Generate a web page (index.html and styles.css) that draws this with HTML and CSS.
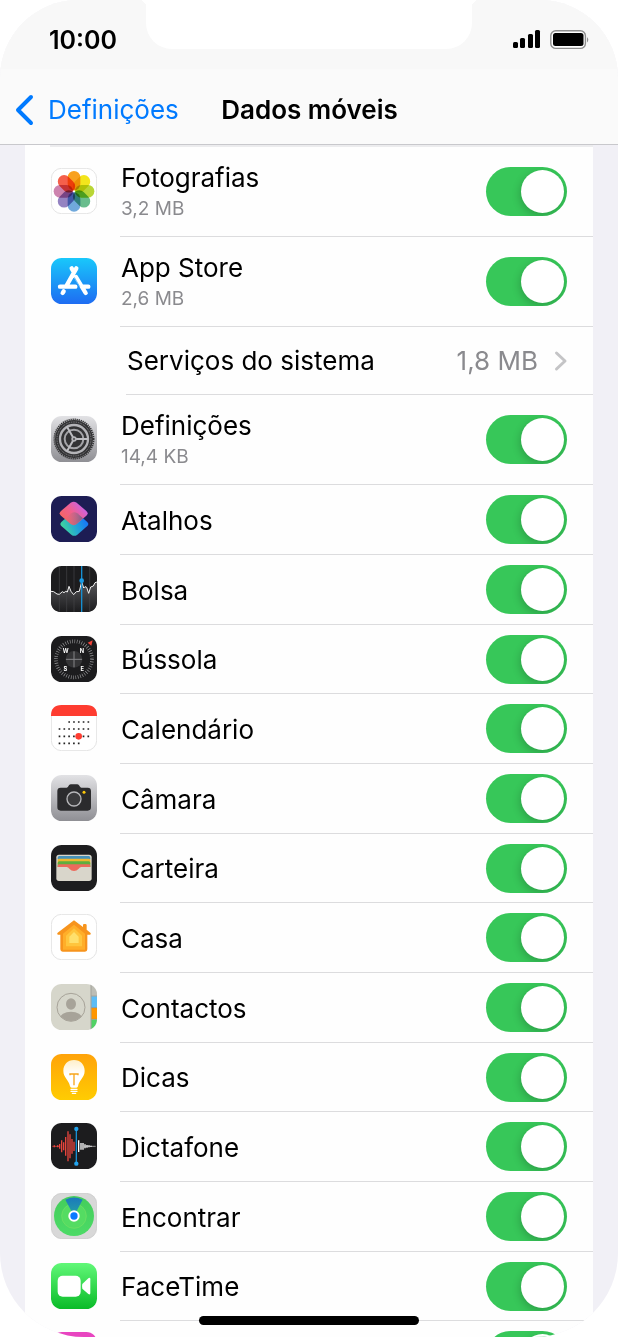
FILE: index.html
```html
<!DOCTYPE html>
<html lang="pt">
<head>
  <meta charset="UTF-8" />
  <meta name="viewport" content="width=device-width, initial-scale=1.0"/>
  <title>Dados móveis</title>
  <link rel="stylesheet" href="styles.css">
</head>
<body>
  <div class="phone">
    <header class="header">
      <div class="status">
        <span class="time">10:00</span>
        <div class="notch"></div>
        <div class="indicators">
          <svg width="28" height="19" viewBox="0 0 28 19">
            <rect x="0" y="12" width="5" height="6" rx="1.5"/>
            <rect x="7" y="8" width="5" height="10" rx="1.5"/>
            <rect x="15" y="4" width="5" height="14" rx="1.5"/>
            <rect x="22" y="0" width="5" height="18" rx="1.5"/>
          </svg>
          <svg width="40" height="20" viewBox="0 0 40 20">
            <rect x="0.8" y="0.8" width="34.6" height="17.6" rx="5" fill="#fff" stroke="#8e8e8e" stroke-width="1.4"/>
            <rect x="3" y="3" width="30.5" height="13" rx="2.5"/>
            <path d="M37 7q2.6 2.8 0 5.6z" fill="#8e8e8e"/>
          </svg>
        </div>
      </div>
      <nav class="nav">
        <a href="#" class="back">
          <svg width="20" height="32" viewBox="0 0 20 32">
            <path d="M17 3L4 16L17 29" fill="none" stroke="#007aff" stroke-width="4" stroke-linecap="round" stroke-linejoin="round"/>
          </svg>
          Definições
        </a>
        <h1>Dados móveis</h1>
      </nav>
    </header>

    <main class="content">
      <ul class="list">
        <li class="row tall">
          <svg class="icon" viewBox="0 0 138 138">
            <rect x="1" y="1" width="136" height="136" rx="31" fill="#fff" stroke="#e4e4e4" stroke-width="3"/>
            <g class="petals" transform="translate(69 70)">
              <rect x="-19" y="-61" width="38" height="58" rx="19" fill="#f8a11f"/>
              <rect x="-19" y="-61" width="38" height="58" rx="19" fill="#f3e51c" transform="rotate(45)"/>
              <rect x="-19" y="-61" width="38" height="58" rx="19" fill="#b9d636" transform="rotate(90)"/>
              <rect x="-19" y="-61" width="38" height="58" rx="19" fill="#69bd8d" transform="rotate(135)"/>
              <rect x="-19" y="-61" width="38" height="58" rx="19" fill="#70a9dc" transform="rotate(180)"/>
              <rect x="-19" y="-61" width="38" height="58" rx="19" fill="#9483c2" transform="rotate(225)"/>
              <rect x="-19" y="-61" width="38" height="58" rx="19" fill="#cd83ae" transform="rotate(270)"/>
              <rect x="-19" y="-61" width="38" height="58" rx="19" fill="#f5604b" transform="rotate(315)"/>
            </g>
          </svg>
          <div class="body">
            <label for="photos">Fotografias<small>3,2 MB</small></label>
            <input type="checkbox" class="switch" id="photos" checked>
          </div>
        </li>
        <li class="row tall">
          <svg class="icon" viewBox="0 0 138 138">
            <defs><linearGradient id="store" x2="0" y2="1"><stop stop-color="#19c8fb"/><stop offset="1" stop-color="#1e6cf2"/></linearGradient></defs>
            <rect width="138" height="138" rx="32" fill="url(#store)"/>
            <g fill="none" stroke="#fff" stroke-width="13" stroke-linecap="round">
              <path d="M76 31L46 84M38 100L35 105M62 31L66 38M75 57L104 105M27 86H73M94 86H112"/>
            </g>
            <path d="M70 58L86 86" stroke="#1e9af7" stroke-width="2"/>
          </svg>
          <div class="body">
            <label for="appstore">App Store<small>2,6 MB</small></label>
            <input type="checkbox" class="switch" id="appstore" checked>
          </div>
        </li>
        <li class="row system">
          <a href="#" class="body">
            <span>Serviços do sistema</span>
            <span class="value">1,8 MB</span>
            <svg width="14" height="22" viewBox="0 0 14 22">
              <path d="M2.500 3L11 11L2.500 19" fill="none" stroke="#c4c4c6" stroke-width="3" stroke-linecap="round" stroke-linejoin="round"/>
            </svg>
          </a>
        </li>
        <li class="row tall">
          <svg class="icon" viewBox="0 0 138 138">
            <defs><linearGradient id="metal" x2="0" y2="1"><stop stop-color="#e2e2e5"/><stop offset="1" stop-color="#8f8f94"/></linearGradient></defs>
            <rect width="138" height="138" rx="32" fill="url(#metal)"/>
            <circle cx="69" cy="69" r="57" fill="#333335"/>
            <circle cx="69" cy="69" r="59" fill="none" stroke="#333335" stroke-width="5" stroke-dasharray="3.700 2.480"/>
            <circle cx="69" cy="69" r="51" fill="none" stroke="#8e8e92" stroke-width="3" stroke-dasharray="2.500 2.840"/>
            <circle cx="69" cy="69" r="42" fill="none" stroke="#b4b4b8" stroke-width="7"/>
            <circle cx="69" cy="69" r="28" fill="none" stroke="#a4a4a8" stroke-width="6"/>
            <path d="M69 69H112M69 69L47.500 31.800M69 69L47.500 106.200" stroke="#bdbdc1" stroke-width="6"/>
            <circle cx="69" cy="69" r="8" fill="#b4b4b8"/>
            <circle cx="69" cy="69" r="3" fill="#4a4a4c"/>
          </svg>
          <div class="body">
            <label for="settings">Definições<small>14,4 KB</small></label>
            <input type="checkbox" class="switch" id="settings" checked>
          </div>
        </li>
      </ul>

      <ul class="list apps">
        <li class="row">
          <svg class="icon" viewBox="0 0 138 138">
            <defs>
              <linearGradient id="cut1" x1="0.1" y1="0.8" x2="0.9" y2="0.2"><stop stop-color="#f5665e"/><stop offset="0.5" stop-color="#f0608f"/><stop offset="1" stop-color="#c862ea"/></linearGradient>
              <linearGradient id="cut2" x1="0.1" y1="0.7" x2="0.9" y2="0.4"><stop stop-color="#3fd39e"/><stop offset="0.5" stop-color="#24a9d2"/><stop offset="1" stop-color="#187bf5"/></linearGradient>
              <linearGradient id="cut3"><stop stop-color="#c9707a" stop-opacity="0"/><stop offset="1" stop-color="#7a6288"/></linearGradient>
            </defs>
            <rect width="138" height="138" rx="32" fill="#1d1d54"/>
            <path d="M61 52Q70 46 79 52L108 77Q116 84 108 91L79 116Q70 123 61 116L32 91Q24 84 32 77Z" fill="url(#cut2)"/>
            <path d="M59 20Q68 14 77 20L106 45Q114 52 106 59L77 84Q68 91 59 84L30 59Q22 52 30 45Z" fill="url(#cut1)"/>
            <path d="M61 52Q70 46 79 52L96 67L77 84Q68 91 59 84L42 68Z" fill="url(#cut3)"/>
          </svg>
          <div class="body">
            <label for="shortcuts">Atalhos</label>
            <input type="checkbox" class="switch" id="shortcuts" checked>
          </div>
        </li>
        <li class="row">
          <svg class="icon" viewBox="0 0 138 138">
            <defs><linearGradient id="stock" x2="0" y2="1"><stop stop-color="#555558"/><stop offset="1" stop-color="#1c1c1e"/></linearGradient></defs>
            <rect width="138" height="138" rx="32" fill="#1c1c1e"/>
            <path d="M0 76L8 77L18 84L25 85L34 77L39 80L44 76L49 78L54 61L60 76L68 86L76 77L85 76L92 47L98 66L102 62L107 64L113 82L119 63L127 60L132 50L138 48V106Q138 138 106 138H32Q0 138 0 106Z" fill="url(#stock)"/>
            <path d="M25 1V137M47 0V138M69 0V138M116 2V136" stroke="#454548" stroke-width="2"/>
            <path d="M0 76L8 77L18 84L25 85L34 77L39 80L44 76L49 78L54 61L60 76L68 86L76 77L85 76L92 47L98 66L102 62L107 64L113 82L119 63L127 60L132 50L138 48" fill="none" stroke="#f2f2f2" stroke-width="3" stroke-linejoin="round"/>
            <path d="M92 0V138" stroke="#168fd2" stroke-width="4"/>
            <circle cx="92" cy="44" r="7" fill="#1b9de6"/>
          </svg>
          <div class="body">
            <label for="stocks">Bolsa</label>
            <input type="checkbox" class="switch" id="stocks" checked>
          </div>
        </li>
        <li class="row">
          <svg class="icon" viewBox="0 0 138 138">
            <rect width="138" height="138" rx="32" fill="#1c1c1e"/>
            <circle cx="69" cy="70" r="54" fill="none" stroke="#a0a0a2" stroke-width="11" stroke-dasharray="1.800 5.270"/>
            <circle cx="69" cy="70" r="25" fill="#343436"/>
            <path d="M69 46V94M45 70H93" stroke="#858587" stroke-width="3"/>
            <g class="points">
              <text x="44" y="51">W</text>
              <text x="93" y="51">N</text>
              <text x="43" y="104">S</text>
              <text x="94" y="104">E</text>
            </g>
            <path d="M125 13L110 20L121 29Z" fill="#f0443a"/>
          </svg>
          <div class="body">
            <label for="compass">Bússola</label>
            <input type="checkbox" class="switch" id="compass" checked>
          </div>
        </li>
        <li class="row">
          <svg class="icon" viewBox="0 0 138 138">
            <rect x="1" y="1" width="136" height="136" rx="31" fill="#fff" stroke="#e4e4e4" stroke-width="3"/>
            <path d="M0 33V32Q0 0 32 0H106Q138 0 138 32V33Z" fill="#fe3c30"/>
            <path d="M52 51H116M23 72H116M23 94H116M23 115H87" stroke="#222" stroke-width="5" stroke-dasharray="5 9.400"/>
            <circle cx="83" cy="94" r="10" fill="#fe3c30"/>
          </svg>
          <div class="body">
            <label for="calendar">Calendário</label>
            <input type="checkbox" class="switch" id="calendar" checked>
          </div>
        </li>
        <li class="row">
          <svg class="icon" viewBox="0 0 138 138">
            <rect width="138" height="138" rx="32" fill="url(#metal)"/>
            <path d="M29 38H47Q50 38 52 34L54 31Q56 28 60 28H78Q82 28 84 31L86 34Q88 38 91 38H110Q120 38 120 48V97Q120 107 110 107H29Q19 107 19 97V48Q19 38 29 38Z" fill="#2b2b2d"/>
            <circle cx="69" cy="72" r="21" fill="#3b3b3d" stroke="#b8b8bb" stroke-width="4"/>
            <circle cx="99" cy="52" r="4.500" fill="#fdc90a"/>
          </svg>
          <div class="body">
            <label for="camera">Câmara</label>
            <input type="checkbox" class="switch" id="camera" checked>
          </div>
        </li>
        <li class="row">
          <svg class="icon" viewBox="0 0 138 138">
            <rect width="138" height="138" rx="32" fill="#1d1d1f"/>
            <rect x="16" y="29" width="106" height="79" rx="8" fill="#d9d6cb"/>
            <path d="M20 43V38Q20 33 25 33H113Q118 33 118 38V43Z" fill="#4692b9"/>
            <path d="M20 48V45Q20 41 25 41H113Q118 41 118 45V58H20Z" fill="#f0b72e"/>
            <path d="M20 66V54Q20 49 25 49H113Q118 49 118 54V66Z" fill="#5fae3f"/>
            <path d="M20 66V62Q20 58 25 58H113Q118 58 118 62V66H91Q86 66 83 71Q77 78 69 78T55 71Q52 66 47 66Z" fill="#ed6a5c"/>
          </svg>
          <div class="body">
            <label for="wallet">Carteira</label>
            <input type="checkbox" class="switch" id="wallet" checked>
          </div>
        </li>
        <li class="row">
          <svg class="icon" viewBox="0 0 138 138">
            <rect x="1" y="1" width="136" height="136" rx="31" fill="#fff" stroke="#e4e4e4" stroke-width="3"/>
            <path d="M69 19L20 56Q16 60 21 62H28V106Q28 113 35 113H102Q109 113 109 106V62H117Q122 60 118 56L107 47V34Q107 30 103 30H99Q96 30 96 34V39Z" fill="#f7941d"/>
            <path d="M69 32L36 59V107H102V59Z" fill="#ffae29"/>
            <path d="M69 43L45 65V97H93V65Z" fill="#ffc53d"/>
            <path d="M69 54L55 68V87H83V68Z" fill="#ffe06c"/>
          </svg>
          <div class="body">
            <label for="home">Casa</label>
            <input type="checkbox" class="switch" id="home" checked>
          </div>
        </li>
        <li class="row">
          <svg class="icon" viewBox="0 0 138 138">
            <clipPath id="tile"><rect width="138" height="138" rx="32"/></clipPath>
            <g clip-path="url(#tile)">
              <rect width="138" height="138" fill="#d6d6cb"/>
              <rect x="121" width="17" height="35" fill="#bdbdb5"/>
              <rect x="121" y="37" width="17" height="34" fill="#5cbcf6"/>
              <rect x="121" y="72" width="17" height="33" fill="#ff9500"/>
              <rect x="121" y="107" width="17" height="31" fill="#50d365"/>
              <path d="M120 0V138M121 36H138M121 71H138M121 106H138" stroke="#85857f" stroke-width="2"/>
            </g>
            <clipPath id="face"><circle cx="60" cy="70" r="41"/></clipPath>
            <g clip-path="url(#face)" fill="#a7a399">
              <ellipse cx="60" cy="60" rx="15" ry="17"/>
              <ellipse cx="60" cy="105" rx="34" ry="22"/>
            </g>
            <circle cx="60" cy="70" r="42" fill="none" stroke="#a7a399" stroke-width="3"/>
          </svg>
          <div class="body">
            <label for="contacts">Contactos</label>
            <input type="checkbox" class="switch" id="contacts" checked>
          </div>
        </li>
        <li class="row">
          <svg class="icon" viewBox="0 0 138 138">
            <defs>
              <linearGradient id="tip" x2="0" y2="1"><stop stop-color="#ffa30a"/><stop offset="1" stop-color="#ffcc02"/></linearGradient>
              <linearGradient id="bulb" x2="0" y2="1"><stop stop-color="#ffefc9"/><stop offset="0.500" stop-color="#fff"/></linearGradient>
            </defs>
            <rect width="138" height="138" rx="32" fill="url(#tip)"/>
            <path d="M69 18C50 18 37 32 37 50C37 71 54 77 57 97Q58 101 62 101H76Q80 101 81 97C84 77 101 71 101 50C101 32 88 18 69 18Z" fill="url(#bulb)"/>
            <path d="M57 64V60H81V64M69 60V94" fill="none" stroke="#f7a51a" stroke-width="4"/>
            <path d="M60 106H78M60 112H78M64 118H74" stroke="#fff" stroke-width="4" stroke-linecap="round"/>
          </svg>
          <div class="body">
            <label for="tips">Dicas</label>
            <input type="checkbox" class="switch" id="tips" checked>
          </div>
        </li>
        <li class="row">
          <svg class="icon" viewBox="0 0 138 138">
            <rect width="138" height="138" rx="32" fill="#1c1c1e"/>
            <path d="M4 70H26" stroke="#b23a35" stroke-width="3"/>
            <path d="M10 67V73M20 67V73M26 63V77M32 52V88M38 58V82M44 42V98M51 25V115M57 34V106M63 48V92M69 56V84" stroke="#e8443c" stroke-width="4"/>
            <path d="M83 52V87M90 60V80M96 60V80M102 64V76M108 66V74M114 67V73M120 68V72" stroke="#fff" stroke-width="4"/>
            <path d="M100 70H134" stroke="#d0d0d0" stroke-width="2"/>
            <path d="M76 18V122" stroke="#168fd2" stroke-width="4"/>
            <circle cx="76" cy="18" r="6.500" fill="#22a4ee"/>
            <circle cx="76" cy="122" r="6.500" fill="#22a4ee"/>
          </svg>
          <div class="body">
            <label for="recorder">Dictafone</label>
            <input type="checkbox" class="switch" id="recorder" checked>
          </div>
        </li>
        <li class="row">
          <svg class="icon" viewBox="0 0 138 138">
            <defs>
              <linearGradient id="find" x2="0" y2="1"><stop stop-color="#44cd5b"/><stop offset="1" stop-color="#4cdb66"/></linearGradient>
              <linearGradient id="beam" x2="0" y2="1"><stop stop-color="#1b78bd"/><stop offset="1" stop-color="#25a5a2"/></linearGradient>
            </defs>
            <rect x="1" y="1" width="136" height="136" rx="31" fill="#d8d8d8" stroke="#c6c6c6" stroke-width="2"/>
            <circle cx="69" cy="69" r="60" fill="url(#find)"/>
            <circle cx="69" cy="69" r="37" fill="#54dc62" stroke="#75df64" stroke-width="2"/>
            <path d="M69 69L43 20Q69 7 95 20Z" fill="url(#beam)"/>
            <circle cx="69" cy="69" r="17" fill="#fff"/>
            <circle cx="69" cy="69" r="11" fill="#0a7aff"/>
          </svg>
          <div class="body">
            <label for="find-my">Encontrar</label>
            <input type="checkbox" class="switch" id="find-my" checked>
          </div>
        </li>
        <li class="row">
          <svg class="icon" viewBox="0 0 138 138">
            <defs><linearGradient id="video" x2="0" y2="1"><stop stop-color="#61f878"/><stop offset="1" stop-color="#0abb28"/></linearGradient></defs>
            <rect width="138" height="138" rx="32" fill="url(#video)"/>
            <rect x="20" y="38" width="69" height="63" rx="15" fill="#fff"/>
            <path d="M94 63L112 46Q118 42 118 49V90Q118 97 112 93L94 77Q92 70 94 63Z" fill="#fff"/>
          </svg>
          <div class="body">
            <label for="facetime">FaceTime</label>
            <input type="checkbox" class="switch" id="facetime" checked>
          </div>
        </li>
        <li class="row">
          <svg class="icon" viewBox="0 0 138 138">
            <rect width="138" height="138" rx="32" fill="#e845c0"/>
          </svg>
          <div class="body last">
            <input type="checkbox" class="switch" aria-label="iTunes Store" checked>
          </div>
        </li>
      </ul>
    </main>
    <div class="home-bar"></div>
  </div>
</body>
</html>
```
FILE: styles.css
```css
* {
  box-sizing: border-box;
}

body {
  margin: 0;
  background: #fff;
  color: #000;
  font-family: Inter, "Liberation Sans", sans-serif;
  font-size: 26px;
  line-height: 32px;
}

a {
  color: inherit;
  text-decoration: none;
}

.phone {
  position: relative;
  display: flex;
  flex-direction: column;
  height: 100vh;
  overflow: hidden;
  background: #f1f0f6;
  border-radius: 78px 78px 84px 84px;
}

/* Status bar and navigation */
.header {
  background: #fafafa;
  border-bottom: 1px solid #c8c8cc;
}

.status {
  display: grid;
  grid-template-columns: 146px 1fr 146px;
  height: 69px;
  background: #f8f8f8;
}

.time {
  padding: 24px 0 0 49px;
  font-size: 25px;
  font-weight: 600;
}

.notch {
  position: relative;
  height: 49px;
  background: #fff;
  border-radius: 0 0 26px 26px;
}

.notch::before,
.notch::after {
  content: "";
  position: absolute;
  top: 0;
  right: 100%;
  width: 7px;
  height: 7px;
  background: radial-gradient(circle at 0 100%, transparent 7px, #fff 7px);
}

.notch::after {
  right: auto;
  left: 100%;
  background: radial-gradient(circle at 100% 100%, transparent 7px, #fff 7px);
}

.indicators {
  display: flex;
  gap: 9px;
  padding: 30px 0 0 41px;
}

.nav {
  display: grid;
  grid-template-columns: 1fr auto 1fr;
  align-items: center;
  height: 75px;
  padding: 6px 13px 0 14px;
}

.back {
  display: flex;
  align-items: center;
  gap: 14px;
  color: #007aff;
}

.nav h1 {
  margin: 0;
  font-size: 26px;
  font-weight: 600;
}

/* Lists */
.content {
  flex: 1;
  min-height: 0;
  margin: 0 25px;
  overflow: hidden;
  background: #fefefe;
}

.content::before {
  content: "";
  display: block;
  height: 2px;
  margin-left: 25px;
  background: #ececee;
}

.list {
  margin: 0;
  padding: 0;
  list-style: none;
}

.row {
  display: flex;
  align-items: center;
  gap: 23px;
  height: 70px;
  padding-left: 26px;
}

.apps .row:nth-child(3n) {
  height: 69px;
}

.tall {
  height: 90px;
}

.system {
  height: 68px;
  padding-left: 101px;
}

.icon {
  flex: none;
  width: 46px;
  height: 46px;
  margin-bottom: 2px;
}

.petals rect {
  mix-blend-mode: multiply;
}

.points {
  fill: #fff;
  font-size: 17px;
  font-weight: 700;
  text-anchor: middle;
}

.body {
  display: flex;
  flex: 1;
  align-items: center;
  height: 100%;
  padding: 0 26px 0 1px;
  border-bottom: 1px solid #dcdcde;
}

.system .body {
  padding: 1px 25px 0 1px;
}

.last {
  justify-content: flex-end;
}

.body label {
  flex: 1;
  padding-top: 2px;
}

.body small {
  display: block;
  color: #8a8a8e;
  font-size: 19px;
  line-height: 30px;
}

.value {
  margin: 0 16px 0 auto;
  color: #8a8a8e;
}

/* Toggle */
.switch {
  appearance: none;
  display: flex;
  flex: none;
  width: 81px;
  height: 49px;
  margin: 0;
  padding: 3px;
  overflow: hidden;
  background: #e9e9eb;
  border-radius: 25px;
  cursor: pointer;
}

.switch::before {
  content: "";
  width: 43px;
  height: 43px;
  background: #fff;
  border-radius: 50%;
  box-shadow: -1px 3px 8px rgba(0, 0, 0, 0.2);
}

.switch:checked {
  justify-content: flex-end;
  background: #37c759;
}

.home-bar {
  position: absolute;
  bottom: 12px;
  left: 50%;
  width: 220px;
  height: 9px;
  margin-left: -110px;
  background: #000;
  border-radius: 5px;
}
```
